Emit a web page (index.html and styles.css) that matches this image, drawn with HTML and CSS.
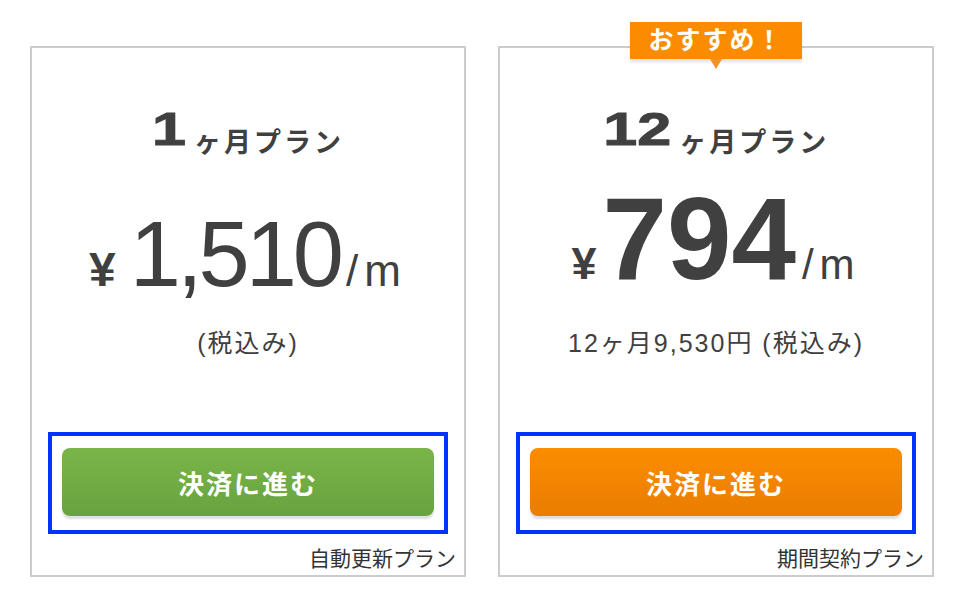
FILE: index.html
```html
<!DOCTYPE html>
<html lang="ja">
<head>
    <meta charset="UTF-8">
    <meta name="viewport" content="width=device-width, initial-scale=1.0">
    <title>プラン選択</title>
    <link rel="stylesheet" href="styles.css">
</head>
<body>
    <div class="plans">
        <!-- 1ヶ月 -->
        <div class="card">
            <div class="plan-title"><span class="num num-1">1</span><span class="unit">ヶ月プラン</span></div>
            <div class="price price-monthly">
                <span class="yen">¥</span>
                <span class="amount">1,510</span>
                <span class="per">/m</span>
            </div>
            <div class="note">(税込み)</div>
            <div class="action">
                <button class="btn btn-green">決済に進む</button>
            </div>
            <div class="plan-type">自動更新プラン</div>
        </div>

        <!-- 12ヶ月 -->
        <div class="card card-recommend">
            <div class="badge">おすすめ！</div>
            <div class="plan-title"><span class="num num-12">12</span><span class="unit">ヶ月プラン</span></div>
            <div class="price price-yearly">
                <span class="yen">¥</span>
                <span class="amount">794</span>
                <span class="per">/m</span>
            </div>
            <div class="note">12ヶ月9,530円 (税込み)</div>
            <div class="action">
                <button class="btn btn-orange">決済に進む</button>
            </div>
            <div class="plan-type">期間契約プラン</div>
        </div>
    </div>
</body>
</html>
```

FILE: styles.css
```css
* {
    margin: 0;
    padding: 0;
    box-sizing: border-box;
}

body {
    background: #fff;
    font-family: "Liberation Sans", "Noto Sans CJK JP", sans-serif;
    color: #404040;
}

.plans {
    display: flex;
    gap: 32px;
    padding: 46px 0 0 30px;
}

.card {
    position: relative;
    width: 436px;
    height: 531px;
    border: 2px solid #cccccc;
    padding: 0 8px 4px;
    display: flex;
    flex-direction: column;
}

/* badge */
.badge {
    position: absolute;
    top: -26px;
    left: 50%;
    transform: translateX(-50%);
    width: 172px;
    height: 37px;
    background: #fb8c00;
    color: #fff;
    font-size: 25px;
    font-weight: bold;
    letter-spacing: 2px;
    line-height: 37px;
    text-align: center;
    box-shadow: 0 3px 3px rgba(0, 0, 0, 0.12);
}

.badge::after {
    content: "";
    position: absolute;
    left: 50%;
    bottom: -10px;
    margin-left: -6px;
    border-left: 6px solid transparent;
    border-right: 6px solid transparent;
    border-top: 10px solid #f0922a;
}

/* title */
.plan-title {
    margin-top: 51px;
    font-size: 47px;
    font-weight: bold;
    line-height: 60px;
    text-align: center;
}

.plan-title .num {
    display: inline-block;
    transform: scaleX(1.3);
    -webkit-text-stroke: 1px #404040;
}

.num-1 {
    margin: 0 4px;
}

.num-12 {
    margin: 0 8px;
}

.plan-title .unit {
    font-size: 27px;
    line-height: 1;
    letter-spacing: 3px;
    vertical-align: -7px;
    margin-left: 8px;
}

/* price */
.price {
    height: 164px;
    display: flex;
    justify-content: center;
    align-items: baseline;
}

.price span {
    line-height: 1;
}

.yen {
    font-size: 45px;
    font-weight: bold;
    margin-right: 6px;
}

.per {
    font-size: 44px;
    letter-spacing: 6px;
    margin-left: 6px;
}

.price-monthly {
    padding-top: 49px;
}

.price-monthly .amount {
    font-size: 92px;
    letter-spacing: -4px;
}

.price-monthly .yen {
    font-size: 48px;
    margin-right: 14px;
}

.price-yearly {
    padding-top: 22px;
}

.price-yearly .amount {
    font-size: 116px;
    font-weight: bold;
}

.price-yearly .per {
    font-size: 42px;
}

.note {
    font-size: 25px;
    line-height: 40px;
    letter-spacing: 2px;
    text-align: center;
}

/* button area */
.action {
    margin: auto 8px 0;
    width: 400px;
    height: 102px;
    border: 4px solid #0033ff;
    padding: 12px 9px 0 10px;
}

.btn {
    display: block;
    width: 372px;
    height: 68px;
    border: none;
    border-radius: 8px;
    color: #fff;
    font-family: inherit;
    font-size: 26px;
    font-weight: bold;
    letter-spacing: 2px;
    cursor: pointer;
    box-shadow: 0 3px 2px rgba(0, 0, 0, 0.13);
}

.btn-green {
    background: linear-gradient(to bottom, #7ab54a, #67a33e);
}

.btn-orange {
    background: linear-gradient(to bottom, #fc8d00, #ea7c00);
}

.plan-type {
    margin-top: 13px;
    font-size: 21px;
    line-height: 24px;
    text-align: right;
    color: #333;
}
```
